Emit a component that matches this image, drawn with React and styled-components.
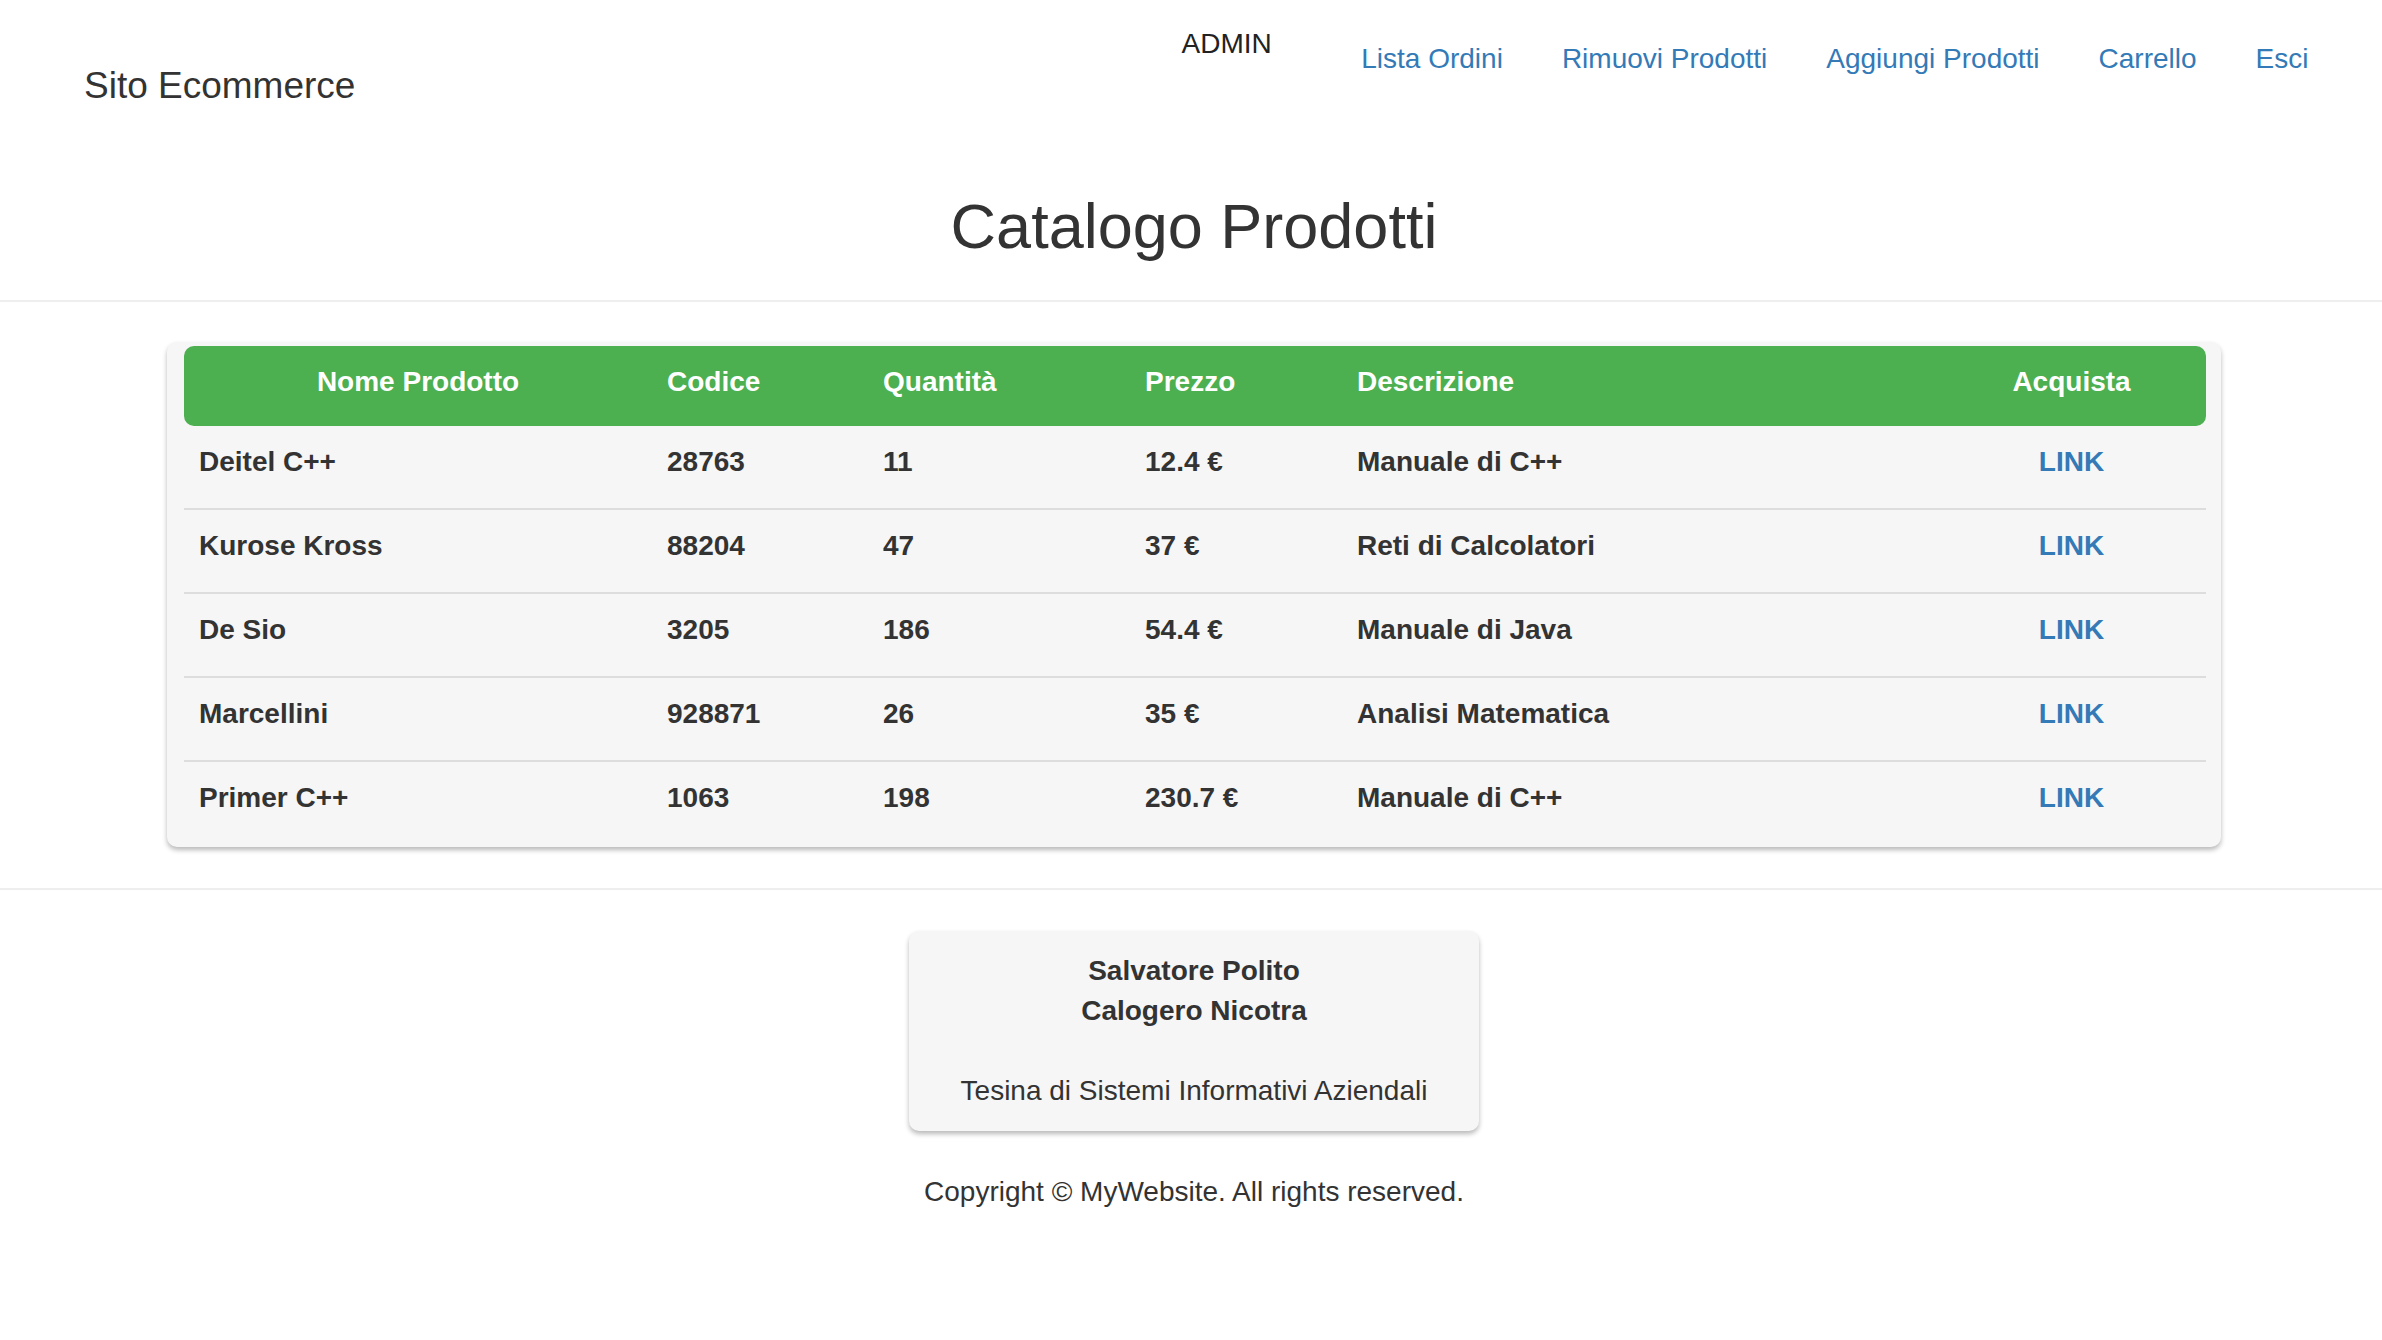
import React from "react";
import styled, { createGlobalStyle } from "styled-components";

const GlobalStyle = createGlobalStyle`
  html, body {
    margin: 0;
    padding: 0;
    background: #ffffff;
  }
  body {
    font-family: "Liberation Sans", Helvetica, Arial, sans-serif;
    color: #333333;
    font-size: 28px;
    line-height: 40px;
  }
  * { box-sizing: border-box; }
`;

const Page = styled.div`
  width: 100%;
  min-height: 1340px;
`;

const Header = styled.header`
  display: flex;
  justify-content: space-between;
  align-items: flex-start;
  height: 134px;
  padding: 0 44px 0 84px;
`;

const Brand = styled.div`
  margin-top: 66px;
  font-size: 37px;
  line-height: 40px;
  color: #333333;
`;

const Nav = styled.nav`
  display: flex;
  align-items: flex-start;
`;

const UserLabel = styled.span`
  margin-top: 24px;
  margin-right: 60px;
  font-size: 28px;
  line-height: 40px;
  color: #222222;
`;

const NavLink = styled.a`
  margin-top: 39px;
  padding: 0 29.5px;
  font-size: 28px;
  line-height: 40px;
  color: #337ab7;
  text-decoration: none;
`;

const Title = styled.h2`
  margin: 59px 0 0;
  padding-left: 6px;
  text-align: center;
  font-size: 63px;
  line-height: 67px;
  font-weight: 400;
  color: #333333;
`;

const Rule = styled.hr`
  margin: ${(p) => p.$top}px 0 0;
  border: 0;
  border-top: 2px solid #eeeeee;
  height: 0;
`;

const TableWrap = styled.section`
  padding: 40px 161px 0 167px;
`;

const TablePanel = styled.div`
  background: #f6f6f6;
  border-radius: 10px;
  padding: 4px 15px 3px 17px;
  box-shadow: 0 3px 5px rgba(0, 0, 0, 0.28);
`;

const cols = "468px 216px 262px 212px 595px 1fr";

const HeadRow = styled.div`
  display: grid;
  grid-template-columns: ${cols};
  background: #4caf50;
  border-radius: 10px;
`;

const HeadCell = styled.div`
  padding: 16px 15px 24px;
  font-size: 28px;
  line-height: 40px;
  font-weight: 700;
  color: #ffffff;
  text-align: ${(p) => (p.$center ? "center" : "left")};
  white-space: nowrap;
`;

const DataRow = styled.div`
  display: grid;
  grid-template-columns: ${cols};
  border-bottom: 2px solid #dddddd;
  &:last-child {
    border-bottom: 0;
  }
`;

const DataCell = styled.div`
  padding: 16px 15px 26px;
  font-size: 28px;
  line-height: 40px;
  font-weight: 700;
  color: #333333;
  text-align: ${(p) => (p.$center ? "center" : "left")};
  white-space: nowrap;
`;

const BuyLink = styled.a`
  color: #337ab7;
  text-decoration: none;
  font-weight: 700;
`;

const Footer = styled.footer`
  display: flex;
  flex-direction: column;
  align-items: center;
  padding: 41px 0 0 6px;
`;

const Card = styled.div`
  width: 570px;
  padding: 20px 30px;
  background: #f6f6f6;
  border-radius: 10px;
  box-shadow: 0 3px 5px rgba(0, 0, 0, 0.28);
  text-align: center;
  font-size: 28px;
  line-height: 40px;
  color: #333333;
`;

const Author = styled.div`
  font-weight: 700;
`;

const Course = styled.div`
  margin-top: 40px;
  font-weight: 400;
`;

const Copyright = styled.p`
  margin: 41px 0 0;
  font-size: 28px;
  line-height: 40px;
  color: #333333;
  text-align: center;
`;

const products = [
  { name: "Deitel C++", code: "28763", qty: "11", price: "12.4 €", desc: "Manuale di C++" },
  { name: "Kurose Kross", code: "88204", qty: "47", price: "37 €", desc: "Reti di Calcolatori" },
  { name: "De Sio", code: "3205", qty: "186", price: "54.4 €", desc: "Manuale di Java" },
  { name: "Marcellini", code: "928871", qty: "26", price: "35 €", desc: "Analisi Matematica" },
  { name: "Primer C++", code: "1063", qty: "198", price: "230.7 €", desc: "Manuale di C++" },
];

export default function App() {
  return (
    <Page>
      <GlobalStyle />
      <Header>
        <Brand>Sito Ecommerce</Brand>
        <Nav>
          <UserLabel>ADMIN</UserLabel>
          <NavLink href="#">Lista Ordini</NavLink>
          <NavLink href="#">Rimuovi Prodotti</NavLink>
          <NavLink href="#">Aggiungi Prodotti</NavLink>
          <NavLink href="#">Carrello</NavLink>
          <NavLink href="#">Esci</NavLink>
        </Nav>
      </Header>

      <Title>Catalogo Prodotti</Title>
      <Rule $top={40} />

      <TableWrap>
        <TablePanel>
          <HeadRow>
            <HeadCell $center>Nome Prodotto</HeadCell>
            <HeadCell>Codice</HeadCell>
            <HeadCell>Quantità</HeadCell>
            <HeadCell>Prezzo</HeadCell>
            <HeadCell>Descrizione</HeadCell>
            <HeadCell $center>Acquista</HeadCell>
          </HeadRow>
          {products.map((p) => (
            <DataRow key={p.name}>
              <DataCell>{p.name}</DataCell>
              <DataCell>{p.code}</DataCell>
              <DataCell>{p.qty}</DataCell>
              <DataCell>{p.price}</DataCell>
              <DataCell>{p.desc}</DataCell>
              <DataCell $center>
                <BuyLink href="#">LINK</BuyLink>
              </DataCell>
            </DataRow>
          ))}
        </TablePanel>
      </TableWrap>

      <Rule $top={41} />

      <Footer>
        <Card>
          <Author>Salvatore Polito</Author>
          <Author>Calogero Nicotra</Author>
          <Course>Tesina di Sistemi Informativi Aziendali</Course>
        </Card>
        <Copyright>Copyright © MyWebsite. All rights reserved.</Copyright>
      </Footer>
    </Page>
  );
}
